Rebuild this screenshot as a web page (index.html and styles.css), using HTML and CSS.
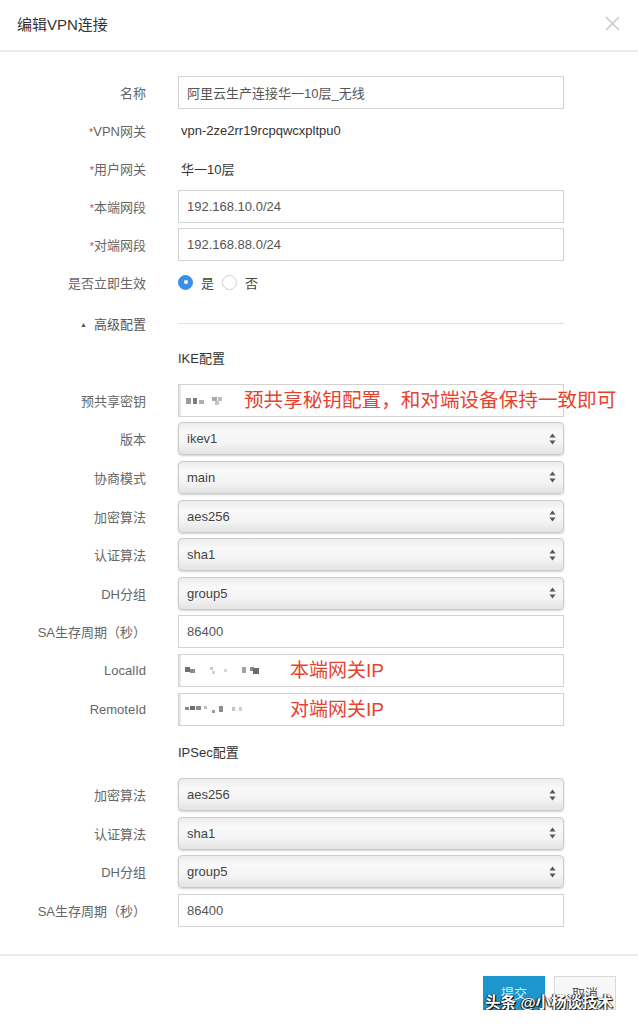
FILE: index.html
```html
<!DOCTYPE html>
<html lang="zh-CN">
<head>
    <meta charset="UTF-8">
    <title>编辑VPN连接</title>
    <link rel="stylesheet" href="styles.css">
</head>
<body>
    <svg width="0" height="0" class="defs">
        <filter id="mosaic"><feGaussianBlur stdDeviation="0.7"/></filter>
    </svg>
    <div class="dialog">
        <div class="dialog-header">
            <h3 class="dialog-title">编辑VPN连接</h3>
            <svg class="close" width="15" height="15" viewBox="0 0 15 15">
                <path d="M1 1L14 14M14 1L1 14" stroke="#c4c4c4" stroke-width="1.4" fill="none"/>
            </svg>
        </div>

        <div class="dialog-body">
            <div class="form-row">
                <label class="form-label">名称</label>
                <input class="input" type="text" value="阿里云生产连接华一10层_无线">
            </div>
            <div class="form-row">
                <label class="form-label"><span class="req">*</span>VPN网关</label>
                <div class="form-value">vpn-2ze2rr19rcpqwcxpltpu0</div>
            </div>
            <div class="form-row">
                <label class="form-label"><span class="req">*</span>用户网关</label>
                <div class="form-value">华一10层</div>
            </div>
            <div class="form-row">
                <label class="form-label"><span class="req">*</span>本端网段</label>
                <input class="input" type="text" value="192.168.10.0/24">
            </div>
            <div class="form-row">
                <label class="form-label"><span class="req">*</span>对端网段</label>
                <input class="input" type="text" value="192.168.88.0/24">
            </div>
            <div class="form-row">
                <label class="form-label">是否立即生效</label>
                <div class="radio-group">
                    <span class="radio checked"></span><span class="radio-text">是</span>
                    <span class="radio"></span><span class="radio-text">否</span>
                </div>
            </div>

            <div class="form-row row-advanced">
                <div class="form-label advanced-toggle"><span class="caret">▲</span>高级配置</div>
                <div class="divider"></div>
            </div>

            <div class="section-title">IKE配置</div>
            <div class="group-ike">
                <div class="form-row">
                    <label class="form-label">预共享密钥</label>
                    <div class="input masked">
                        <svg width="42" height="12" class="blur">
                            <g filter="url(#mosaic)">
                                <rect x="2" y="4" width="5" height="6" fill="#9a9a9a"/>
                                <rect x="9" y="4" width="4" height="6" fill="#7d7d7d"/>
                                <rect x="15" y="6" width="5" height="4" fill="#b0b0b0"/>
                                <rect x="28" y="3" width="5" height="4" fill="#a8a8a8"/>
                                <rect x="34" y="3" width="4" height="4" fill="#bcbcbc"/>
                                <rect x="31" y="7" width="4" height="4" fill="#c4c4c4"/>
                            </g>
                        </svg>
                        <span class="note note-key">预共享秘钥配置，和对端设备保持一致即可</span>
                    </div>
                </div>
                <div class="form-row">
                    <label class="form-label">版本</label>
                    <div class="select"><span>ikev1</span><svg class="arrows" width="7" height="12" viewBox="0 0 7 12"><path d="M3.5 0.5L6.5 4.5H0.5Z M3.5 11.5L6.5 7.5H0.5Z" fill="#555"/></svg></div>
                </div>
                <div class="form-row">
                    <label class="form-label">协商模式</label>
                    <div class="select"><span>main</span><svg class="arrows" width="7" height="12" viewBox="0 0 7 12"><path d="M3.5 0.5L6.5 4.5H0.5Z M3.5 11.5L6.5 7.5H0.5Z" fill="#555"/></svg></div>
                </div>
                <div class="form-row">
                    <label class="form-label">加密算法</label>
                    <div class="select"><span>aes256</span><svg class="arrows" width="7" height="12" viewBox="0 0 7 12"><path d="M3.5 0.5L6.5 4.5H0.5Z M3.5 11.5L6.5 7.5H0.5Z" fill="#555"/></svg></div>
                </div>
                <div class="form-row">
                    <label class="form-label">认证算法</label>
                    <div class="select"><span>sha1</span><svg class="arrows" width="7" height="12" viewBox="0 0 7 12"><path d="M3.5 0.5L6.5 4.5H0.5Z M3.5 11.5L6.5 7.5H0.5Z" fill="#555"/></svg></div>
                </div>
                <div class="form-row">
                    <label class="form-label">DH分组</label>
                    <div class="select"><span>group5</span><svg class="arrows" width="7" height="12" viewBox="0 0 7 12"><path d="M3.5 0.5L6.5 4.5H0.5Z M3.5 11.5L6.5 7.5H0.5Z" fill="#555"/></svg></div>
                </div>
                <div class="form-row">
                    <label class="form-label">SA生存周期（秒）</label>
                    <input class="input" type="text" value="86400">
                </div>
                <div class="form-row">
                    <label class="form-label">LocalId</label>
                    <div class="input masked">
                        <svg width="94" height="12" class="blur">
                            <g filter="url(#mosaic)">
                                <rect x="1" y="3" width="5" height="5" fill="#6f6f6f"/>
                                <rect x="6" y="5" width="5" height="4" fill="#8c8c8c"/>
                                <rect x="26" y="3" width="3" height="3" fill="#c8c8c8"/>
                                <rect x="28" y="7" width="3" height="3" fill="#cfcfcf"/>
                                <rect x="40" y="5" width="3" height="3" fill="#d6d6d6"/>
                                <rect x="58" y="3" width="4" height="6" fill="#a3a3a3"/>
                                <rect x="66" y="3" width="4" height="4" fill="#8a8a8a"/>
                                <rect x="69" y="4" width="6" height="6" fill="#6c6c6c"/>
                            </g>
                        </svg>
                        <span class="note">本端网关IP</span>
                    </div>
                </div>
                <div class="form-row">
                    <label class="form-label">RemoteId</label>
                    <div class="input masked">
                        <svg width="94" height="12" class="blur">
                            <g filter="url(#mosaic)">
                                <rect x="1" y="4" width="4" height="3" fill="#8a8a8a"/>
                                <rect x="6" y="3" width="5" height="4" fill="#6d6d6d"/>
                                <rect x="12" y="3" width="5" height="4" fill="#8a8a8a"/>
                                <rect x="20" y="3" width="3" height="3" fill="#bdbdbd"/>
                                <rect x="28" y="7" width="3" height="3" fill="#9d9d9d"/>
                                <rect x="35" y="3" width="4" height="6" fill="#8e8e8e"/>
                                <rect x="48" y="4" width="3" height="4" fill="#c6c6c6"/>
                                <rect x="55" y="4" width="3" height="4" fill="#cfcfcf"/>
                            </g>
                        </svg>
                        <span class="note">对端网关IP</span>
                    </div>
                </div>
            </div>

            <div class="section-title section-ipsec">IPSec配置</div>
            <div class="group-ike">
                <div class="form-row">
                    <label class="form-label">加密算法</label>
                    <div class="select"><span>aes256</span><svg class="arrows" width="7" height="12" viewBox="0 0 7 12"><path d="M3.5 0.5L6.5 4.5H0.5Z M3.5 11.5L6.5 7.5H0.5Z" fill="#555"/></svg></div>
                </div>
                <div class="form-row">
                    <label class="form-label">认证算法</label>
                    <div class="select"><span>sha1</span><svg class="arrows" width="7" height="12" viewBox="0 0 7 12"><path d="M3.5 0.5L6.5 4.5H0.5Z M3.5 11.5L6.5 7.5H0.5Z" fill="#555"/></svg></div>
                </div>
                <div class="form-row">
                    <label class="form-label">DH分组</label>
                    <div class="select"><span>group5</span><svg class="arrows" width="7" height="12" viewBox="0 0 7 12"><path d="M3.5 0.5L6.5 4.5H0.5Z M3.5 11.5L6.5 7.5H0.5Z" fill="#555"/></svg></div>
                </div>
                <div class="form-row">
                    <label class="form-label">SA生存周期（秒）</label>
                    <input class="input" type="text" value="86400">
                </div>
            </div>
        </div>

        <div class="dialog-footer">
            <button class="btn btn-primary">提交</button>
            <button class="btn btn-default">取消</button>
            <div class="watermark">头条 @小杨谈技术</div>
        </div>
    </div>
</body>
</html>
```

FILE: styles.css
```css
body {
    margin: 0;
    font-family: "Liberation Sans", "Noto Sans CJK SC", sans-serif;
    background: #fff;
    color: #333;
}
.defs {
    position: absolute;
}
.dialog {
    width: 638px;
}
.dialog-header {
    height: 52px;
    border-bottom: 2px solid #ececec;
    display: flex;
    align-items: center;
    justify-content: space-between;
    padding: 0 18px 4px 17px;
    box-sizing: border-box;
}
.dialog-title {
    margin: 0;
    font-size: 15px;
    font-weight: normal;
    color: #333;
}
.dialog-body {
    padding-top: 21px;
}
.form-row {
    display: grid;
    grid-template-columns: 146px 386px;
    column-gap: 32px;
    align-items: center;
    height: 38px;
}
.group-ike .form-row {
    height: 38.6px;
}
.form-label {
    text-align: right;
    font-size: 13px;
    color: #666;
    white-space: nowrap;
}
.req {
    color: #e0413a;
    font-size: 11px;
}
.form-value {
    font-size: 13px;
    color: #333;
    padding-left: 3px;
}
.input {
    box-sizing: border-box;
    width: 386px;
    height: 33px;
    margin: 0;
    border: 1px solid #d2d2d2;
    padding: 0 8px;
    font-family: inherit;
    font-size: 13px;
    color: #555;
    background: #fff;
    outline: none;
}
.masked {
    display: flex;
    align-items: center;
    padding-left: 5px;
    box-shadow: inset 3px 0 3px -2px rgba(0, 0, 0, 0.18);
}
.blur {
    flex: none;
}
.note {
    color: #e5432f;
    font-size: 19px;
    margin-left: 12px;
    white-space: nowrap;
    line-height: 1;
}
.note-key {
    margin-left: 18px;
    font-size: 19.6px;
}
.radio-group {
    display: flex;
    align-items: center;
}
.radio {
    width: 15px;
    height: 15px;
    border-radius: 50%;
    border: 1px solid #d0d0d0;
    box-sizing: border-box;
    background: #fff;
    position: relative;
}
.radio.checked {
    border-color: #3b8fe8;
    background: #3b8fe8;
}
.radio.checked::after {
    content: "";
    position: absolute;
    left: 4.5px;
    top: 4.5px;
    width: 4px;
    height: 4px;
    border-radius: 50%;
    background: #fff;
}
.radio-text {
    font-size: 13px;
    color: #444;
    margin: 0 8px 0 8px;
}
.row-advanced {
    height: 44px;
}
.advanced-toggle {
    color: #555;
}
.caret {
    font-size: 7px;
    margin-right: 7px;
    vertical-align: 2px;
    color: #555;
}
.divider {
    height: 1px;
    background: #e3e3e3;
}
.section-title {
    padding-left: 178px;
    height: 28px;
    line-height: 28px;
    font-size: 13px;
    color: #333;
    margin-bottom: 8px;
}
.section-ipsec {
    margin-top: 11px;
}
.select {
    box-sizing: border-box;
    height: 33px;
    border: 1px solid #cbcbcb;
    border-radius: 4px;
    background: linear-gradient(#ececec 0%, #f9f9f9 30%, #f4f4f4 65%, #e3e3e3 100%);
    box-shadow: 0 1px 2px rgba(0, 0, 0, 0.18);
    display: flex;
    align-items: center;
    justify-content: space-between;
    padding: 0 7px 0 8px;
    font-size: 13px;
    color: #444;
}
.dialog-footer {
    margin-top: 24px;
    border-top: 2px solid #ececec;
    padding: 20px 22px 0 0;
    display: flex;
    justify-content: flex-end;
    gap: 9px;
    position: relative;
}
.btn {
    width: 62px;
    height: 34px;
    font-family: inherit;
    font-size: 13px;
    border-radius: 0;
}
.btn-primary {
    background: #1d95cd;
    color: #d9eef8;
    border: 1px solid #1d95cd;
}
.btn-default {
    background: #f7f7f7;
    color: #555;
    border: 1px solid #d9d9d9;
}
.watermark {
    position: absolute;
    right: 25px;
    top: 34px;
    font-size: 15.5px;
    font-weight: bold;
    color: #fff;
    white-space: nowrap;
    text-shadow: 0 0 1px #000, 1px 1px 1px #000, -1px 0 1px #333;
}
```
